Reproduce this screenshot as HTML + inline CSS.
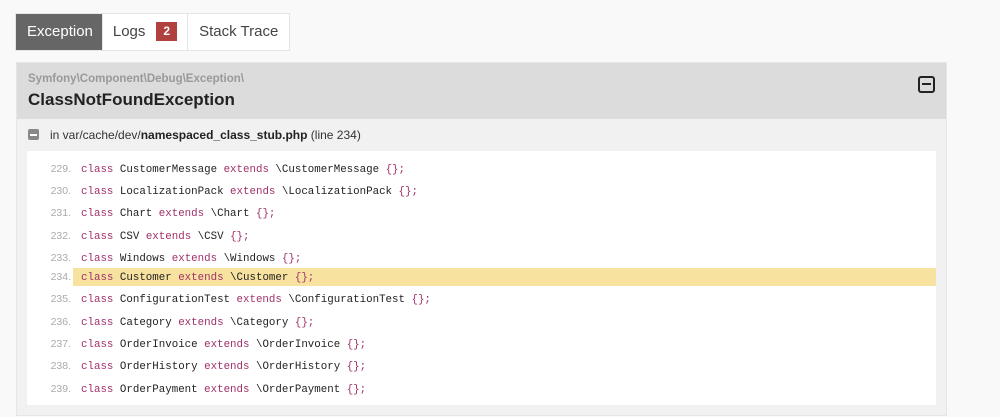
<!DOCTYPE html>
<html><head><style>
body{margin:0;background:#f9f9f9;font-family:"Liberation Sans",sans-serif;width:1000px;height:417px;overflow:hidden;position:relative}
.tabs{position:absolute;left:15px;top:13px;height:36px;display:flex;border:1px solid #e5e5e5;background:#fff}
.tab{font-size:15px;line-height:36px;padding:0 10px;color:#444;border-right:1px solid #e5e5e5}
.tab.a{background:#666;color:#fff;padding:0 9px 0 11px}
.badge{display:inline-block;background:#b0413e;color:#fff;font-size:12px;font-weight:bold;line-height:19px;padding:0 7px;margin-left:11px;vertical-align:1px}
.panel{position:absolute;left:16px;top:62px;width:929px;height:352px;background:#f1f1f1;border:1px solid #e6e6e6}
.hd{height:56px;background:#dcdcdc;position:relative}
.ns{position:absolute;left:11px;top:10px;font-size:11.5px;font-weight:bold;color:#999}
.cls{position:absolute;left:11px;top:27px;font-size:17px;font-weight:bold;color:#222}
.tog{position:absolute;right:11px;top:13px;width:13px;height:13px;border:2px solid #222;border-radius:3px}
.tog:after{content:"";position:absolute;left:2px;right:2px;top:5px;height:2px;background:#222}
.file{position:absolute;left:33px;top:65px;font-size:12px;color:#333}
.fi{position:absolute;left:11px;top:66px;width:11px;height:11px;background:#888;border-radius:2px}
.fi:after{content:"";position:absolute;left:2px;right:2px;top:5px;height:1.5px;background:#fff}
.code{position:absolute;left:10px;top:88px;width:909px;height:254px;background:#fff}
.ln{position:absolute;left:0;width:909px;height:18px;font-family:"Liberation Mono",monospace;font-size:10.8px;line-height:18px;color:#222}
.ln i{font-style:normal;display:inline-block;width:44px;text-align:right;color:#aaa;font-family:"Liberation Sans",sans-serif;font-size:10.5px;margin-right:10px}
.k{color:#a0306a}
.hl{background:#f7e39f}
</style></head><body>
<div class="tabs"><div class="tab a">Exception</div><div class="tab" style="padding:0 10px">Logs<span class="badge">2</span></div><div class="tab" style="border:0;padding:0 11px">Stack Trace</div></div>
<div class="panel">
<div class="hd"><div class="ns">Symfony\Component\Debug\Exception\</div><div class="cls">ClassNotFoundException</div><div class="tog"></div></div>
<div class="fi"></div><div class="file">in var/cache/dev/<b style="color:#222">namespaced_class_stub.php</b> (line 234)</div>
<div class="code">
<div class="ln" style="top:9px"><i>229.</i><span class="k">class</span> CustomerMessage <span class="k">extends</span> \CustomerMessage <span class="k">{};</span></div>
<div class="ln" style="top:31px"><i>230.</i><span class="k">class</span> LocalizationPack <span class="k">extends</span> \LocalizationPack <span class="k">{};</span></div>
<div class="ln" style="top:53px"><i>231.</i><span class="k">class</span> Chart <span class="k">extends</span> \Chart <span class="k">{};</span></div>
<div class="ln" style="top:76px"><i>232.</i><span class="k">class</span> CSV <span class="k">extends</span> \CSV <span class="k">{};</span></div>
<div class="ln" style="top:98px"><i>233.</i><span class="k">class</span> Windows <span class="k">extends</span> \Windows <span class="k">{};</span></div>
<div class="ln" style="top:117px"><i>234.</i><span class="hl" style="position:absolute;left:46px;right:0;top:0;bottom:0"></span><span style="position:relative"><span class="k">class</span> Customer <span class="k">extends</span> \Customer <span class="k">{};</span></span></div>
<div class="ln" style="top:139px"><i>235.</i><span class="k">class</span> ConfigurationTest <span class="k">extends</span> \ConfigurationTest <span class="k">{};</span></div>
<div class="ln" style="top:162px"><i>236.</i><span class="k">class</span> Category <span class="k">extends</span> \Category <span class="k">{};</span></div>
<div class="ln" style="top:184px"><i>237.</i><span class="k">class</span> OrderInvoice <span class="k">extends</span> \OrderInvoice <span class="k">{};</span></div>
<div class="ln" style="top:206px"><i>238.</i><span class="k">class</span> OrderHistory <span class="k">extends</span> \OrderHistory <span class="k">{};</span></div>
<div class="ln" style="top:229px"><i>239.</i><span class="k">class</span> OrderPayment <span class="k">extends</span> \OrderPayment <span class="k">{};</span></div>
</div>
</div>
</body></html>
